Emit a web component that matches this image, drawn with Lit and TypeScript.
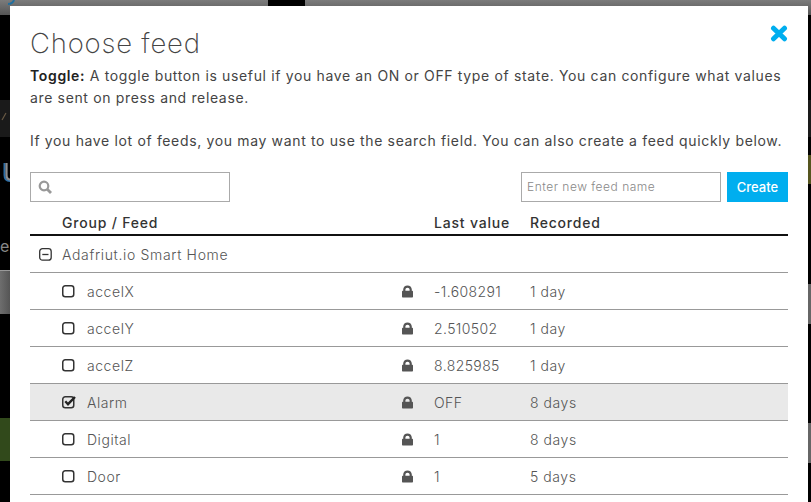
import { LitElement, html, css, svg } from "lit";
import { customElement } from "lit/decorators.js";

const rows = [
  { name: "accelX", value: "-1.608291", rec: "1 day" },
  { name: "accelY", value: "2.510502", rec: "1 day" },
  { name: "accelZ", value: "8.825985", rec: "1 day" },
  { name: "Alarm", value: "OFF", rec: "8 days", on: true },
  { name: "Digital", value: "1", rec: "8 days" },
  { name: "Door", value: "1", rec: "5 days" },
];

const lock = html`<svg class="lock" width="11" height="13" viewBox="0 0 11 13"><path fill="#555" fill-rule="evenodd" d="M1.200 5.800V4.500C1.200 2 3.100.4 5.500.4s4.300 1.600 4.300 4.100v1.300h.2c.6 0 1 .4 1 1v4.600c0 .6-.4 1-1 1H1c-.6 0-1-.4-1-1V6.800c0-.6.4-1 1-1zM3.400 5.800h4.200V4.600c0-1.100-.9-1.900-2.100-1.900s-2.100.8-2.100 1.900z"/></svg>`;

const box = (on: boolean) => html`<svg class="check" width="15" height="14" viewBox="0 0 15 14">
  <rect x="0.750" y="1.750" width="11" height="11" rx="2.500" fill="none" stroke="#333" stroke-width="1.500"/>
  ${on ? svg`<path d="M3.300 6.300l2.700 2.900L13 2" fill="none" stroke="#222" stroke-width="2.400"/>` : ""}
</svg>`;

@customElement("app-root")
export class AppRoot extends LitElement {
  static styles = css`
    :host { display: block; width: 811px; height: 502px; overflow: hidden; position: relative; background: #000;
      font-family: "Inter", "Liberation Sans", sans-serif; }
    .bg { position: absolute; }
    .top1 { left: 0; top: 0; width: 268px; height: 15px; background: linear-gradient(#7c7c7c, #555); }
    .top2 { left: 305px; top: 0; width: 506px; height: 15px; background: linear-gradient(#7c7c7c, #555); }
    .swoosh { left: 6px; top: 0; width: 12px; height: 6px; }
    .dark-l { left: 0; top: 100px; width: 10px; height: 37px; background: #1a1a1a; }
    .slash { left: 0; top: 112px; width: 10px; height: 10px; }
    .dark-r { left: 808px; top: 100px; width: 3px; height: 37px; background: #1a1a1a; }
    .olive { left: 808px; top: 155px; width: 3px; height: 29px; background: #55551f; }
    .u { left: 3px; top: 163px; width: 7px; height: 20px; overflow: hidden; }
    .e { left: 0; top: 236px; width: 10px; overflow: hidden; color: #888; font-size: 16px; line-height: 20px; }
    .grey { left: 0; top: 270px; width: 10px; height: 43px; background: linear-gradient(90deg, #6e6e6e, #555); border-top: 1px solid #999; }
    .green { left: 0; top: 418px; width: 10px; height: 43px; background: #31491b; }
    .grey-r1 { left: 808px; top: 284px; width: 3px; height: 40px; background: #666; }
    .grey-r2 { left: 808px; top: 423px; width: 3px; height: 40px; background: #666; }
    .modal { position: absolute; left: 10px; top: 6px; width: 798px; height: 496px; box-sizing: border-box; background: #fff; padding: 18px 20px 0; color: #444; }
    h1 { margin: 0; font-size: 27.500px; line-height: 38px; font-weight: 200; color: #444; letter-spacing: 0.800px; }
    .close { position: absolute; right: 20px; top: 19px; }
    p { margin: 0 0 21px; font-size: 14px; line-height: 22px; font-weight: 400; color: #444; white-space: nowrap; letter-spacing: 0.650px; }
    p:last-child { margin-bottom: 20px; }
    p b { font-weight: 600; color: #222; }
    .text { margin-top: 3px; }
    .tools { display: flex; justify-content: space-between; height: 30px; }
    .search { width: 200px; height: 30px; box-sizing: border-box; border: 1px solid #aaa; display: flex; align-items: center; padding-left: 7px; }
    .create { display: flex; gap: 6px; }
    .name { width: 200px; height: 30px; box-sizing: border-box; border: 1px solid #aaa; font-size: 12px; font-weight: 300; color: #888; padding-left: 5px; line-height: 28px; letter-spacing: 0.500px; }
    .btn { width: 61px; height: 30px; background: #00aeef; color: #fff; font-size: 13px; font-weight: 500; display: flex; align-items: center; justify-content: center; }
    .row { display: grid; grid-template-columns: 32px 25px 315px 32px 96px 1fr; align-items: center; height: 36px; border-bottom: 1px solid #999; font-size: 14px; font-weight: 300; color: #555; letter-spacing: 0.550px; }
    .num { letter-spacing: 0.400px; }
    .head { height: 20px; padding-bottom: 2px; margin-top: 10px; border-bottom: 2px solid #111; font-weight: 500; color: #333; letter-spacing: 0.800px; }
    .head .g { grid-column: 2 / 5; }
    .group .t { grid-column: 2 / -1; letter-spacing: 0.660px; }
    .on { background: #e9e9e9; }
    .check, .lock, .minus { display: block; }
    .minus { margin-left: 9px; }
  `;
  render() {
    return html`
      ${["top1","top2","dark-l","dark-r","olive","grey","green","grey-r1","grey-r2"].map(c => html`<div class="bg ${c}"></div>`)}
      <svg class="bg swoosh" viewBox="0 0 12 6"><path d="M2 4c3 0 5-1 6-4" fill="none" stroke="#1f6f9f" stroke-width="2"/></svg>
      <svg class="bg slash" viewBox="0 0 10 10"><path d="M2 8l4-7" stroke="#6a5a45" stroke-width="1.200"/></svg>
      <svg class="bg u" viewBox="0 0 7 20"><path d="M1.500 0v12c0 4 1.500 6 5.500 6" fill="none" stroke="#2d6fa8" stroke-width="2"/><path d="M3.500 0v12c0 3 1 4.500 3.500 4.500" fill="none" stroke="#8f8f8f" stroke-width="2.200"/></svg>
      <div class="bg e">e</div>
      <div class="modal">
        <h1>Choose feed</h1>
        <svg class="close" width="18" height="17" viewBox="0 0 18 17"><path d="M3.500 3.200l11 10.600M14.500 3.200L3.500 13.800" stroke="#00aeef" stroke-width="5" stroke-linecap="round"/></svg>
        <div class="text">
          <p><b>Toggle:</b> A toggle button is useful if you have an ON or OFF type of state. You can configure what values<br>are sent on press and release.</p>
          <p>If you have lot of feeds, you may want to use the search field. You can also create a feed quickly below.</p>
        </div>
        <div class="tools">
          <div class="search"><svg width="14" height="14" viewBox="0 0 14 14"><circle cx="6" cy="6" r="4.300" fill="none" stroke="#999" stroke-width="2.200"/><path d="M9 9l4 4" stroke="#999" stroke-width="2.800"/></svg></div>
          <div class="create"><div class="name">Enter new feed name</div><div class="btn">Create</div></div>
        </div>
        <div class="row head"><span></span><span class="g">Group / Feed</span><span>Last value</span><span>Recorded</span></div>
        <div class="row group"><svg class="minus" width="14" height="13" viewBox="0 0 14 13"><rect x="0.700" y="0.700" width="11.500" height="11.500" rx="2.800" fill="none" stroke="#333" stroke-width="1.300"/><path d="M3.300 6.500h6.200" stroke="#333" stroke-width="1.300"/></svg><span class="t">Adafriut.io Smart Home</span></div>
        ${rows.map(r => html`<div class="row ${r.on ? "on" : ""}"><span></span>${box(!!r.on)}<span>${r.name}</span>${lock}<span class="num">${r.value}</span><span>${r.rec}</span></div>`)}
      </div>
    `;
  }
}
